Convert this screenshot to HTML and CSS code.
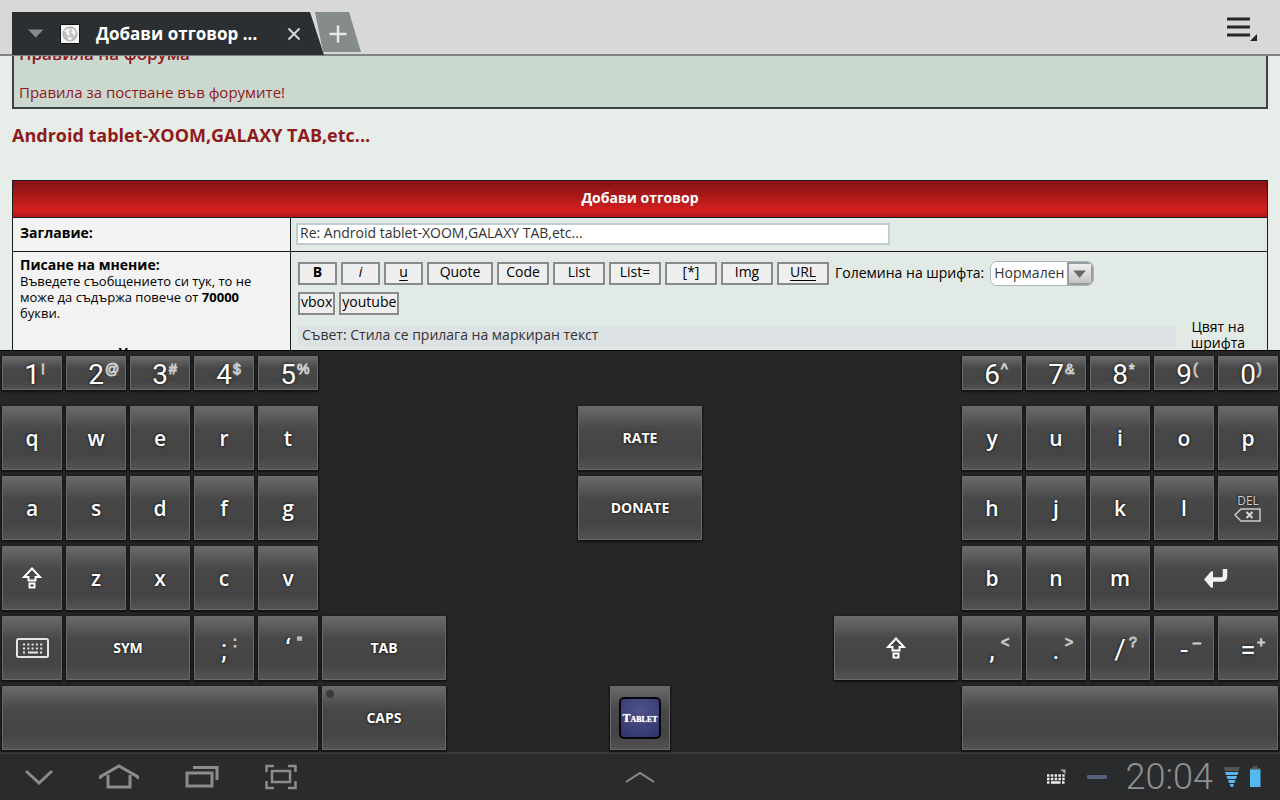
FILE: index.html
```html
<!DOCTYPE html>
<html lang="bg">

<head>
    <meta charset="utf-8">
    <title>Добави отговор</title>
    <link rel="stylesheet" href="styles.css">
</head>

<body>
    <header class="tabbar">
        <div class="tab">
            <svg class="tab-arrow" width="16" height="9" viewBox="0 0 16 9"><path d="M0 0.5h15.500l-7.700 8z" fill="#868b8c"/></svg>
            <svg class="favicon" width="20" height="20" viewBox="0 0 20 20">
                <rect x="0.500" y="0.500" width="19" height="19" fill="#f4f4f4" stroke="#111"/>
                <circle cx="10" cy="10" r="7" fill="#c2c2c2" stroke="#a5a5a5"/>
                <path d="M5 6l4-2 1 2-1 2 1 2-1 2-2-1-1-3-2-1zM11 4l4 2 1 3-2 3-1-2-2-1 1-2zM8 13l3 0 1 2-2 2-2-2z" fill="#f2f2f2"/>
            </svg>
            <span class="tab-title">Добави отговор ...</span>
            <button class="tab-close" aria-label="Затвори">
                <svg width="14" height="14" viewBox="0 0 14 14"><path d="M1.500 1.500l11 11M12.500 1.500l-11 11" stroke="#d4d6d6" stroke-width="2"/></svg>
            </button>
        </div>
        <button class="tab-new" aria-label="Нов раздел">
            <svg width="18" height="18" viewBox="0 0 18 18"><path d="M9 0.500v17M0.500 9h17" stroke="#e6e8e8" stroke-width="2.500"/></svg>
        </button>
        <button class="menu" aria-label="Меню">
            <svg width="32" height="26" viewBox="0 0 32 26">
                <path d="M1 3h23M1 11h23M1 19h23" stroke="#262626" stroke-width="3"/>
                <path d="M31 18v7h-7z" fill="#262626"/>
            </svg>
        </button>
    </header>

    <main class="page">
        <div class="forum">
            <div class="rules">
                <h3>Правила на форума</h3>
                <a href="#">Правила за постване във форумите!</a>
            </div>

            <h2><a href="#">Android tablet-XOOM,GALAXY TAB,etc...</a></h2>

            <table class="reply">
                <tr>
                    <th class="reply-head" colspan="2">Добави отговор</th>
                </tr>
                <tr class="row-subject">
                    <td class="left"><label for="subject">Заглавие:</label></td>
                    <td class="right"><input type="text" id="subject" value="Re: Android tablet-XOOM,GALAXY TAB,etc..."></td>
                </tr>
                <tr>
                    <td class="left">
                        <b>Писане на мнение:</b>
                        <p class="note">Въведете съобщението си тук, то не може да съдържа повече от <b>70000</b> букви.</p>
                        <p class="smilies">Усмивки</p>
                    </td>
                    <td class="right">
                        <div class="toolbar">
                            <button class="bb w-s"><b>B</b></button>
                            <button class="bb w-s"><i>i</i></button>
                            <button class="bb w-s"><u>u</u></button>
                            <button class="bb w-l">Quote</button>
                            <button class="bb w-m">Code</button>
                            <button class="bb w-m">List</button>
                            <button class="bb w-m">List=</button>
                            <button class="bb w-m">[*]</button>
                            <button class="bb w-m">Img</button>
                            <button class="bb w-m"><u>URL</u></button>
                            <label for="size">Големина на шрифта:</label>
                            <span class="select">
                                <select id="size"><option>Нормален</option></select>
                                <svg width="26" height="23" viewBox="0 0 26 23"><path d="M5 8h15l-7.500 9z" fill="#666"/></svg>
                            </span>
                        </div>
                        <div class="toolbar">
                            <button class="bb">vbox</button>
                            <button class="bb">youtube</button>
                        </div>
                        <div class="hint-row">
                            <div class="hint">Съвет: Стила се прилага на маркиран текст</div>
                            <div class="colour">Цвят на шрифта</div>
                        </div>
                    </td>
                </tr>
            </table>
        </div>
    </main>

    <section class="keyboard">
        <div class="keys numbers">
            <button class="key num">1<sup>!</sup></button>
            <button class="key num">2<sup>@</sup></button>
            <button class="key num">3<sup>#</sup></button>
            <button class="key num">4<sup>$</sup></button>
            <button class="key num">5<sup>%</sup></button>
            <button class="key num c16">6<sup>^</sup></button>
            <button class="key num">7<sup>&amp;</sup></button>
            <button class="key num">8<sup>*</sup></button>
            <button class="key num">9<sup>(</sup></button>
            <button class="key num">0<sup>)</sup></button>
        </div>
        <div class="keys">
            <button class="key">q</button>
            <button class="key">w</button>
            <button class="key">e</button>
            <button class="key">r</button>
            <button class="key">t</button>
            <button class="key word c10">RATE</button>
            <button class="key c16">y</button>
            <button class="key">u</button>
            <button class="key">i</button>
            <button class="key">o</button>
            <button class="key">p</button>
        </div>
        <div class="keys">
            <button class="key">a</button>
            <button class="key">s</button>
            <button class="key">d</button>
            <button class="key">f</button>
            <button class="key">g</button>
            <button class="key word c10">DONATE</button>
            <button class="key c16">h</button>
            <button class="key">j</button>
            <button class="key">k</button>
            <button class="key">l</button>
            <button class="key del">
                DEL
                <svg width="28" height="14" viewBox="0 0 28 14">
                    <path d="M1 7l6-6h19v12H7z" fill="none" stroke="#c9c9c9" stroke-width="1.500"/>
                    <path d="M12.500 4l6 6M18.500 4l-6 6" stroke="#d5d5d5" stroke-width="2"/>
                </svg>
            </button>
        </div>
        <div class="keys">
            <button class="key" aria-label="Shift">
                <svg width="20" height="22" viewBox="0 0 20 22">
                    <path d="M10 1.500L2 10h4.500v3.500h7V10H18zM7.500 16.500h5v4h-5z" fill="none" stroke="#fff" stroke-width="1.900"/>
                </svg>
            </button>
            <button class="key">z</button>
            <button class="key">x</button>
            <button class="key">c</button>
            <button class="key">v</button>
            <button class="key c16">b</button>
            <button class="key">n</button>
            <button class="key">m</button>
            <button class="key wide" aria-label="Enter">
                <svg width="24" height="20" viewBox="0 0 24 20">
                    <path d="M21 1v7q0 3.500-3.500 3.500H8" fill="none" stroke="#f2f2f2" stroke-width="4.500"/>
                    <path d="M0 11.500l7-8q2-1 2 1v14q0 2-2 1z" fill="#f2f2f2"/>
                </svg>
            </button>
        </div>
        <div class="keys">
            <button class="key" aria-label="Клавиатура">
                <svg width="33" height="20" viewBox="0 0 33 20">
                    <rect x="1" y="1" width="31" height="18" rx="1.500" fill="none" stroke="#e4e4e4" stroke-width="2"/>
                    <path d="M7 6.500h20M7 10.500h20" stroke="#e4e4e4" stroke-width="2" stroke-dasharray="2 2.300"/>
                    <path d="M7 14.500h2M12 14.500h10M24 14.500h2" stroke="#e4e4e4" stroke-width="2"/>
                </svg>
            </button>
            <button class="key word wide">SYM</button>
            <button class="key punct">;<sup>:</sup></button>
            <button class="key punct">‘<sup>"</sup></button>
            <button class="key word wide">TAB</button>
            <button class="key c14" aria-label="Shift">
                <svg width="20" height="22" viewBox="0 0 20 22">
                    <path d="M10 1.500L2 10h4.500v3.500h7V10H18zM7.500 16.500h5v4h-5z" fill="none" stroke="#fff" stroke-width="1.900"/>
                </svg>
            </button>
            <button class="key punct">,<sup>&lt;</sup></button>
            <button class="key punct">.<sup>&gt;</sup></button>
            <button class="key punct">/<sup>?</sup></button>
            <button class="key punct">-<sup>–</sup></button>
            <button class="key punct">=<sup>+</sup></button>
        </div>
        <div class="keys">
            <button class="key space" aria-label="Интервал"></button>
            <button class="key word wide caps">CAPS</button>
            <div class="logo-slot">
                <button class="key logo-key"><span class="logo">Tablet</span></button>
            </div>
            <button class="key space c16" aria-label="Интервал"></button>
        </div>
    </section>

    <nav class="sysbar">
        <div class="sys-left">
            <svg width="28" height="16" viewBox="0 0 28 16"><path d="M1 2l13 12L27 2" fill="none" stroke="#8b8c8d" stroke-width="3"/></svg>
            <svg width="40" height="26" viewBox="0 0 40 26"><path d="M1 15v-2L20 2l19 11v2M9 11v12h22V11" fill="none" stroke="#8b8c8d" stroke-width="3"/></svg>
            <svg width="34" height="24" viewBox="0 0 34 24"><path d="M2 8h25v13H2zM8 2.500h24V15" fill="none" stroke="#8b8c8d" stroke-width="3"/></svg>
            <svg width="32" height="26" viewBox="0 0 32 26"><path d="M7 7h18v11H7zM1.500 8V2H9M23 2h7.500v6M30.500 17v7H23M9 24H1.500v-7" fill="none" stroke="#8b8c8d" stroke-width="2.500"/></svg>
        </div>
        <svg width="30" height="12" viewBox="0 0 30 12"><path d="M1 11L15 2l14 9" fill="none" stroke="#8b8c8d" stroke-width="2"/></svg>
        <div class="sys-right">
            <svg class="ime" width="20" height="16" viewBox="0 0 20 16">
                <path d="M0 6.500h18M0 10h18" stroke="#ededed" stroke-width="2.500" stroke-dasharray="2.500 1.300"/>
                <path d="M0 13.500h2.500M4 13.500h9.500M15 13.500h2.500" stroke="#ededed" stroke-width="2.500"/>
                <path d="M13 0.500h5.500V5z" fill="#aaa"/>
            </svg>
            <svg class="dash" width="20" height="4" viewBox="0 0 20 4"><rect width="20" height="4" rx="1" fill="#55617a"/></svg>
            <span class="clock">20:04</span>
            <svg class="wifi" width="18" height="20" viewBox="0 0 18 20">
                <path d="M0.500 0h16.500l-1.500 4h-13.500z" fill="#555"/>
                <path d="M2 5h13.500l-1 3H3zM3.500 9h10.500l-1 3H4.500zM5 13h7.500l-1 3H6zM6.500 17h4.500l-1 3H8z" fill="#55b8ee"/>
            </svg>
            <svg width="12" height="22" viewBox="0 0 12 22"><path d="M3.500 0h5v2H11v2H1V2h2.500z" fill="#555"/><path d="M1 3.500h10.500V21H1z" fill="#55b8ee"/></svg>
        </div>
    </nav>
</body>

</html>
```
FILE: styles.css
```css
* {
    box-sizing: border-box;
}

body {
    margin: 0;
    height: 100vh;
    display: flex;
    flex-direction: column;
    overflow: hidden;
    background-color: #262626;
    font-family: "Open Sans", "Noto Sans", sans-serif;
    font-size: 14px;
    color: #000;
}

button,
input,
select {
    font-family: inherit;
    font-size: inherit;
    color: inherit;
    margin: 0;
    padding: 0;
}

svg {
    display: block;
    flex: none;
}

h2,
h3,
p {
    margin: 0;
}

/* browser tabs */
.tabbar {
    flex: none;
    height: 56px;
    display: flex;
    align-items: flex-start;
    padding: 12px 22px 0 12px;
    background-color: #d8d8d8;
    border-bottom: 2px solid #7f8583;
}

.tab {
    width: 312px;
    height: 43px;
    display: flex;
    align-items: center;
    padding: 0 23px 0 16px;
    background-color: #2b2f32;
    clip-path: polygon(0 0, 298px 0, 100% 100%, 0 100%);
    color: white;
}

.favicon {
    margin-left: 16px;
}

.tab-title {
    flex: 1;
    margin-left: 16px;
    font-size: 17px;
    font-weight: bold;
    white-space: nowrap;
}

.tab-close,
.tab-new,
.menu {
    border: none;
    background: none;
}

.tab-new {
    width: 46px;
    height: 40px;
    margin-left: -9px;
    display: flex;
    align-items: center;
    justify-content: center;
    padding-top: 4px;
    background-color: #868b8b;
    clip-path: polygon(0 0, 34px 0, 100% 100%, 8px 100%);
}

.menu {
    margin: 4px 0 0 auto;
}

/* forum page */
.page {
    flex: 1;
    min-height: 0;
    overflow: hidden;
    background-color: #e7eeea;
}

.forum {
    margin: -24px 12px 0;
}

.forum a,
.forum h3 {
    color: #8f1a1a;
    text-decoration: none;
}

.rules {
    height: 77px;
    padding: 8px 5px 0;
    border: 2px solid #3c4240;
    background-color: #cbd8d0;
    line-height: 24px;
    font-size: 15px;
}

.rules h3 {
    font-size: 17px;
    font-weight: 600;
    margin-bottom: 14px;
}

.rules a {
    display: block;
}

.forum h2 {
    font-size: 18px;
    line-height: 24px;
    margin: 14px 0 33px;
}

.reply {
    width: 100%;
    border-collapse: collapse;
    background-color: #e1eae5;
}

.reply td,
.reply th {
    border: 1px solid #1c1c1c;
}

.reply .reply-head {
    height: 37px;
    padding: 0 0 4px;
    color: white;
    background-image: linear-gradient(#841212, #d3201f 80%, #a81818);
}

.reply td {
    padding: 5px;
    vertical-align: top;
}

.reply .left {
    width: 278px;
    padding: 5px 30px 5px 7px;
    line-height: 16px;
    background-color: #f3f3f3;
}

.reply .row-subject .left {
    padding-top: 7px;
}

.row-subject {
    height: 34px;
}

.row-subject label {
    font-weight: bold;
}

.note {
    font-size: 13px;
}

.smilies {
    margin: 24px -23px 0 0;
    text-align: center;
    font-weight: bold;
}

#subject {
    display: block;
    width: 594px;
    height: 22px;
    padding: 0 2px 3px;
    border: 2px solid #bfccd2;
    background-color: white;
    color: #333;
}

.toolbar {
    display: flex;
    align-items: center;
    gap: 4px;
    height: 23px;
    margin: 5px 2px 4px;
}

.toolbar + .toolbar {
    margin-top: 7px;
}

.toolbar label {
    margin-left: 2px;
    padding-bottom: 3px;
}

.bb {
    height: 23px;
    padding: 0 1px 3px;
    border: 2px solid #8a8c8b;
    background-color: #efefef;
    line-height: 16px;
}

.bb u {
    text-underline-offset: 3px;
    padding: 0 3px;
}

.w-s {
    width: 39px;
}

.w-m {
    width: 52px;
}

.w-l {
    width: 66px;
}

.select {
    display: flex;
    width: 104px;
    height: 25px;
    margin-left: 2px;
    border: 1px solid #aab5ba;
    border-radius: 7px;
    overflow: hidden;
    background-color: white;
}

.select select {
    appearance: none;
    flex: 1;
    min-width: 0;
    padding: 0 0 3px 3px;
    border: none;
    background-color: white;
    color: #333;
}

.select svg {
    border: 2px solid #9a9da0;
    background-image: linear-gradient(#f0f0f0, #c4c4c4);
}

.hint-row {
    display: flex;
    align-items: flex-start;
    margin: 0 2px;
}

.hint {
    flex: 1;
    margin-top: 7px;
    padding: 0 4px 2px;
    line-height: 18px;
    background-color: #dce1e4;
    color: #333;
}

.colour {
    width: 84px;
    padding: 0 10px;
    text-align: center;
    line-height: 16px;
}

/* on-screen keyboard */
.keyboard {
    flex: none;
    padding: 5px 2px 2px;
    border-top: 1px solid #000;
    background-color: #262626;
}

.keys {
    display: grid;
    grid-template-columns: repeat(20, 1fr);
    grid-auto-rows: 64px;
    gap: 4px;
    margin-bottom: 6px;
}

.keys:last-child {
    margin-bottom: 0;
}

.numbers {
    grid-auto-rows: 34px;
    margin-bottom: 16px;
}

.key {
    position: relative;
    display: flex;
    align-items: center;
    justify-content: center;
    min-width: 0;
    border: 1px solid #6a6a6a;
    border-radius: 1px;
    background-image: linear-gradient(#6a6a6a, #484848 35%, #444 75%, #525252);
    box-shadow: 0 1px 2px 1px #111;
    color: white;
    font-size: 21px;
    font-weight: 600;
    text-shadow: 0 0 3px #000;
}

.num,
.punct {
    padding: 2px 0 0;
    font-family: Roboto, sans-serif;
    font-size: 28px;
    font-weight: normal;
}

.key sup {
    position: absolute;
    top: 5px;
    left: 38px;
    font-family: "Liberation Sans", Arial, sans-serif;
    font-size: 14px;
    line-height: 14px;
    color: #333;
    -webkit-text-stroke: 1px #ccc;
    text-shadow: none;
}

.punct sup {
    top: 18px;
}

.word {
    padding-bottom: 2px;
    font-size: 14px;
    font-weight: bold;
}

.wide {
    grid-column-end: span 2;
}

.space {
    grid-column-end: span 5;
}

.c10 {
    grid-column: 10 / span 2;
}

.c14 {
    grid-column: 14 / span 2;
}

.c16 {
    grid-column-start: 16;
}

.del {
    flex-direction: column;
    font-size: 12px;
    line-height: 14px;
    font-weight: normal;
    color: #ccc;
}

.caps::before {
    content: "";
    position: absolute;
    top: 3px;
    left: 3px;
    width: 8px;
    height: 8px;
    border-radius: 50%;
    background-color: #3a3a3a;
}

.logo-slot {
    grid-column: 10 / span 2;
    display: flex;
    justify-content: center;
}

.logo-key {
    width: 60px;
}

.logo {
    flex: none;
    width: 42px;
    height: 42px;
    border: 2px solid #05050c;
    border-radius: 5px;
    background-image: radial-gradient(circle at 50% 30%, #50528a, #30326a);
    font-family: "Liberation Serif", "Times New Roman", serif;
    font-size: 12px;
    font-weight: bold;
    font-variant: small-caps;
    line-height: 38px;
    text-shadow: 0 0 1px #fff;
}

/* system bar */
.sysbar {
    flex: none;
    height: 48px;
    display: grid;
    grid-template-columns: 1fr auto 1fr;
    align-items: center;
    padding: 0 19px;
    border-top: 2px solid #3c3d3e;
    background-color: #2a2b2d;
}

.sys-left {
    display: flex;
    align-items: center;
    gap: 46px;
    margin-left: 6px;
}

.sys-right {
    display: flex;
    align-items: center;
    justify-content: flex-end;
}

.dash {
    margin: 0 19px 0 20px;
}

.clock {
    font-family: Roboto, sans-serif;
    font-size: 36px;
    font-weight: 300;
    line-height: 46px;
    color: #8f9091;
}

.wifi {
    margin: 0 8px 0 10px;
}
```
